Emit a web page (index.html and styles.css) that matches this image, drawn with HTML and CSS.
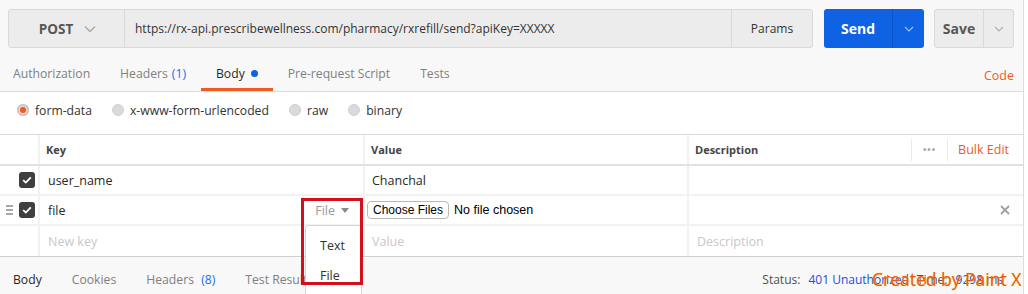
FILE: index.html
```html
<!DOCTYPE html>
<html>
<head>
<meta charset="utf-8">
<link rel="stylesheet" href="styles.css">
</head>
<body>
<div class="app">
  <div class="top">
    <div class="reqbar">
      <div class="urlgroup">
        <div class="method">POST <svg class="chev" width="12" height="8" viewBox="0 0 12 8"><path d="M1 1.5 L6 6.5 L11 1.5" fill="none" stroke="#a8a8a8" stroke-width="1.4"/></svg></div>
        <div class="url">https://rx-api.prescribewellness.com/pharmacy/rxrefill/send?apiKey=XXXXX</div>
        <div class="params">Params</div>
      </div>
      <div class="send">
        <div class="send-main">Send</div>
        <div class="send-arrow"><svg width="10" height="6" viewBox="0 0 10 6"><path d="M1 1 L5 5 L9 1" fill="none" stroke="#9fc0f5" stroke-width="1.2"/></svg></div>
      </div>
      <div class="save">
        <div class="save-main">Save</div>
        <div class="save-arrow"><svg width="10" height="6" viewBox="0 0 10 6"><path d="M1 1 L5 5 L9 1" fill="none" stroke="#b0b0b0" stroke-width="1.2"/></svg></div>
      </div>
    </div>
    <div class="tabs">
      <div class="tab first">Authorization</div>
      <div class="tab">Headers <span class="count">(1)</span></div>
      <div class="tab active">Body <span class="dot"></span></div>
      <div class="tab">Pre-request Script</div>
      <div class="tab">Tests</div>
      <div class="spacer"></div>
      <div class="code">Code</div>
    </div>
  </div>

  <div class="bodytype">
    <label class="radio"><span class="circle on"></span>form-data</label>
    <label class="radio"><span class="circle"></span>x-www-form-urlencoded</label>
    <label class="radio"><span class="circle"></span>raw</label>
    <label class="radio"><span class="circle"></span>binary</label>
  </div>

  <div class="table">
    <div class="row head">
      <div class="c c0"></div>
      <div class="c c1">Key</div>
      <div class="c c2">Value</div>
      <div class="c c3"><span>Description</span><span class="hdr-actions"><span class="dots">•••</span><span class="bulk">Bulk Edit</span></span></div>
    </div>
    <div class="row">
      <div class="c c0"><span class="check"><svg width="10" height="8" viewBox="0 0 10 8"><path d="M1.2 4.2 L3.8 6.6 L8.8 1.4" fill="none" stroke="#fff" stroke-width="1.8"/></svg></span></div>
      <div class="c c1 txt">user_name</div>
      <div class="c c2 txt">Chanchal</div>
      <div class="c c3"></div>
    </div>
    <div class="row">
      <div class="c c0"><span class="handle"><i></i><i></i><i></i></span><span class="check"><svg width="10" height="8" viewBox="0 0 10 8"><path d="M1.2 4.2 L3.8 6.6 L8.8 1.4" fill="none" stroke="#fff" stroke-width="1.8"/></svg></span></div>
      <div class="c c1 txt keyfile"><span>file</span><span class="typesel">File <svg width="8" height="5" viewBox="0 0 8 5"><path d="M0 0 L8 0 L4 5 Z" fill="#8a8a8a"/></svg></span></div>
      <div class="c c2 txt"><span class="filebtn">Choose Files</span><span class="nofile">No file chosen</span></div>
      <div class="c c3 del"><svg width="10" height="10" viewBox="0 0 10 10"><path d="M1 1 L9 9 M9 1 L1 9" stroke="#a0a0a0" stroke-width="1.8"/></svg></div>
    </div>
    <div class="row">
      <div class="c c0"></div>
      <div class="c c1 ph">New key</div>
      <div class="c c2 ph">Value</div>
      <div class="c c3 ph">Description</div>
    </div>
  </div>

  <div class="bottom">
    <div class="btab dark">Body</div>
    <div class="btab">Cookies</div>
    <div class="btab">Headers <span class="count">(8)</span></div>
    <div class="btab">Test Results</div>
    <div class="spacer"></div>
    <div class="status">Status: <span class="blue">401 Unauthorized</span><span class="time">Time: <span class="blue">9298 ms</span></span></div>
  </div>

  <div class="menu">
    <div class="mi">Text</div>
    <div class="mi">File</div>
  </div>
  <div class="redbox"></div>
  <div class="watermark">Created by Paint X</div>
</div>
</body>
</html>
```

FILE: styles.css
```css
* { box-sizing: border-box; }
html, body { margin: 0; padding: 0; background: #fff; }
body { font-family: "Open Sans", "Liberation Sans", sans-serif; font-size: 12px; color: #282828; }

.app { position: relative; width: 1024px; height: 294px; overflow: hidden; border-right: 1px solid #dcdcdc; }

.top { background: #f8f8f8; border-bottom: 1px solid #dcdcdc; }

.reqbar { display: flex; align-items: stretch; height: 48px; padding: 9px 0 0 8px; }
.urlgroup { display: flex; height: 39px; width: 805px; border: 1px solid #d9d9d9; border-radius: 3px; background: #ececec; }
.method { width: 116px; display: flex; align-items: center; justify-content: center; gap: 11px; font-weight: 700; font-size: 13.5px; color: #575757; border-right: 1px solid #d9d9d9; padding-left: 2px; }
.url { flex: 1; display: flex; align-items: center; padding-left: 10px; font-size: 12px; color: #333; border-right: 1px solid #d9d9d9; }
.params { width: 80px; display: flex; align-items: center; justify-content: center; font-size: 12px; color: #333; }

.send { display: flex; height: 39px; width: 100px; margin-left: 11px; background: #1062e5; border-radius: 3px; }
.send-main { width: 69px; display: flex; align-items: center; justify-content: center; color: #fff; font-weight: 700; font-size: 14px; border-right: 1px solid #0b55c9; }
.send-arrow { flex: 1; display: flex; align-items: center; justify-content: center; }

.save { display: flex; height: 39px; width: 80px; margin-left: 10px; background: #ececec; border: 1px solid #d9d9d9; border-radius: 3px; }
.save-main { width: 49px; display: flex; align-items: center; justify-content: center; color: #575757; font-weight: 700; font-size: 14px; border-right: 1px solid #d9d9d9; }
.save-arrow { flex: 1; display: flex; align-items: center; justify-content: center; }

.tabs { display: flex; height: 43px; align-items: stretch; padding-right: 9px; }
.tab { display: flex; align-items: center; padding: 11px 15px 0; color: #808080; font-size: 12.2px; border-bottom: 3px solid transparent; white-space: nowrap; }
.tab.first { padding-left: 13px; }
.tab.active { color: #282828; border-bottom-color: #f15a24; }
.count { color: #1a6ee6; margin-left: 4px; }
.dot { display: inline-block; width: 7px; height: 7px; border-radius: 50%; background: #1062e5; margin-left: 6px; }
.spacer { flex: 1; }
.code { display: flex; align-items: center; padding-top: 12px; color: #f15a24; font-size: 12.5px; }

.bodytype { display: flex; align-items: center; height: 42px; padding: 0 0 6px 17px; gap: 20px; }
.radio { display: flex; align-items: center; font-size: 12.2px; color: #333; }
.circle { width: 12px; height: 12px; border-radius: 50%; background: #dadada; border: 1px solid #cfcfcf; margin-right: 6px; position: relative; }
.circle.on { background: #f15a24; box-shadow: inset 0 0 0 2px #dadada; border-color: #c8c8c8; }

.table { border-top: 1px solid #dcdcdc; border-bottom: 1px solid #d0d0d0; }
.row { display: flex; height: 30px; border-bottom: 2px solid #f2f2f2; }
.row:last-child { border-bottom: none; height: 30px; }
.row.head { height: 31px; border-bottom: 2px solid #e2e2e2; }
.c { display: flex; align-items: center; height: 100%; }
.c0 { width: 40px; border-right: 2px solid #f2f2f2; justify-content: flex-end; padding-right: 3px; gap: 6px; }
.c1 { width: 325px; border-right: 2px solid #f2f2f2; padding-left: 6px; }
.c2 { width: 324px; border-right: 2px solid #f2f2f2; padding-left: 6px; }
.c3 { flex: 1; padding-left: 6px; }
.head .c { font-size: 11px; font-weight: 700; color: #454545; }
.head .c3 { justify-content: space-between; padding-right: 14px; }
.hdr-actions { display: flex; align-items: center; height: 100%; }
.dots { color: #a5a5a5; font-size: 9px; letter-spacing: 1px; padding: 0 11px; border-left: 1px solid #ebebeb; border-right: 1px solid #ebebeb; height: 22px; display: flex; align-items: center; }
.bulk { color: #f15a24; font-weight: 400; font-size: 12.5px; margin-left: 10px; }
.txt { font-size: 12.5px; color: #282828; padding-left: 8px; }
.c2.txt { padding-left: 7px; }
.ph { font-size: 12.5px; color: #c8c8c8; padding-left: 8px; }
.c2.ph { padding-left: 7px; }
.c3.ph { padding-left: 8px; }

.check { width: 16px; height: 16px; border-radius: 3px; background: #3f3f3f; display: flex; align-items: center; justify-content: center; }
.handle { display: flex; flex-direction: column; gap: 2px; width: 7px; }
.handle i { display: block; height: 2px; background: #a8a8a8; }

.keyfile { justify-content: space-between; padding-right: 14px; }
.typesel { color: #9a9a9a; display: flex; align-items: center; gap: 6px; }
.filebtn { font-family: "Liberation Sans", sans-serif; font-size: 12px; color: #000; background: #fff; border: 1px solid #b8b8b8; border-radius: 4px; padding: 1px 5px; margin: 0 5px 0 -5px; }
.nofile { font-family: "Liberation Sans", sans-serif; font-size: 12.5px; color: #000; }
.del { justify-content: flex-end; padding-right: 13px; }

.bottom { display: flex; align-items: center; height: 37px; background: #f8f8f8; padding: 8px 0 0 13px; }
.btab { color: #808080; font-size: 12.2px; margin-right: 30px; white-space: nowrap; }
.btab.dark { color: #282828; }
.status { font-size: 12px; color: #505050; padding-right: 20px; white-space: nowrap; }
.status .blue { color: #1a50d6; margin-left: 5px; }
.time { margin-left: 8px; }

.menu { position: absolute; left: 305px; top: 225px; width: 57px; height: 80px; background: #fff; border: 1px solid #d6d6d6; border-radius: 3px; padding-top: 4px; }
.mi { height: 30px; display: flex; align-items: center; padding-left: 14px; font-size: 12.5px; color: #333; }
.redbox { position: absolute; left: 301px; top: 198px; width: 62px; height: 87px; border: 3px solid #d3101c; }
.watermark { position: absolute; left: 872px; top: 267px; font-family: "Open Sans", sans-serif; font-size: 17.5px; color: #f0561c; text-shadow: 0 0 1px #ffd21a; white-space: nowrap; }
```
